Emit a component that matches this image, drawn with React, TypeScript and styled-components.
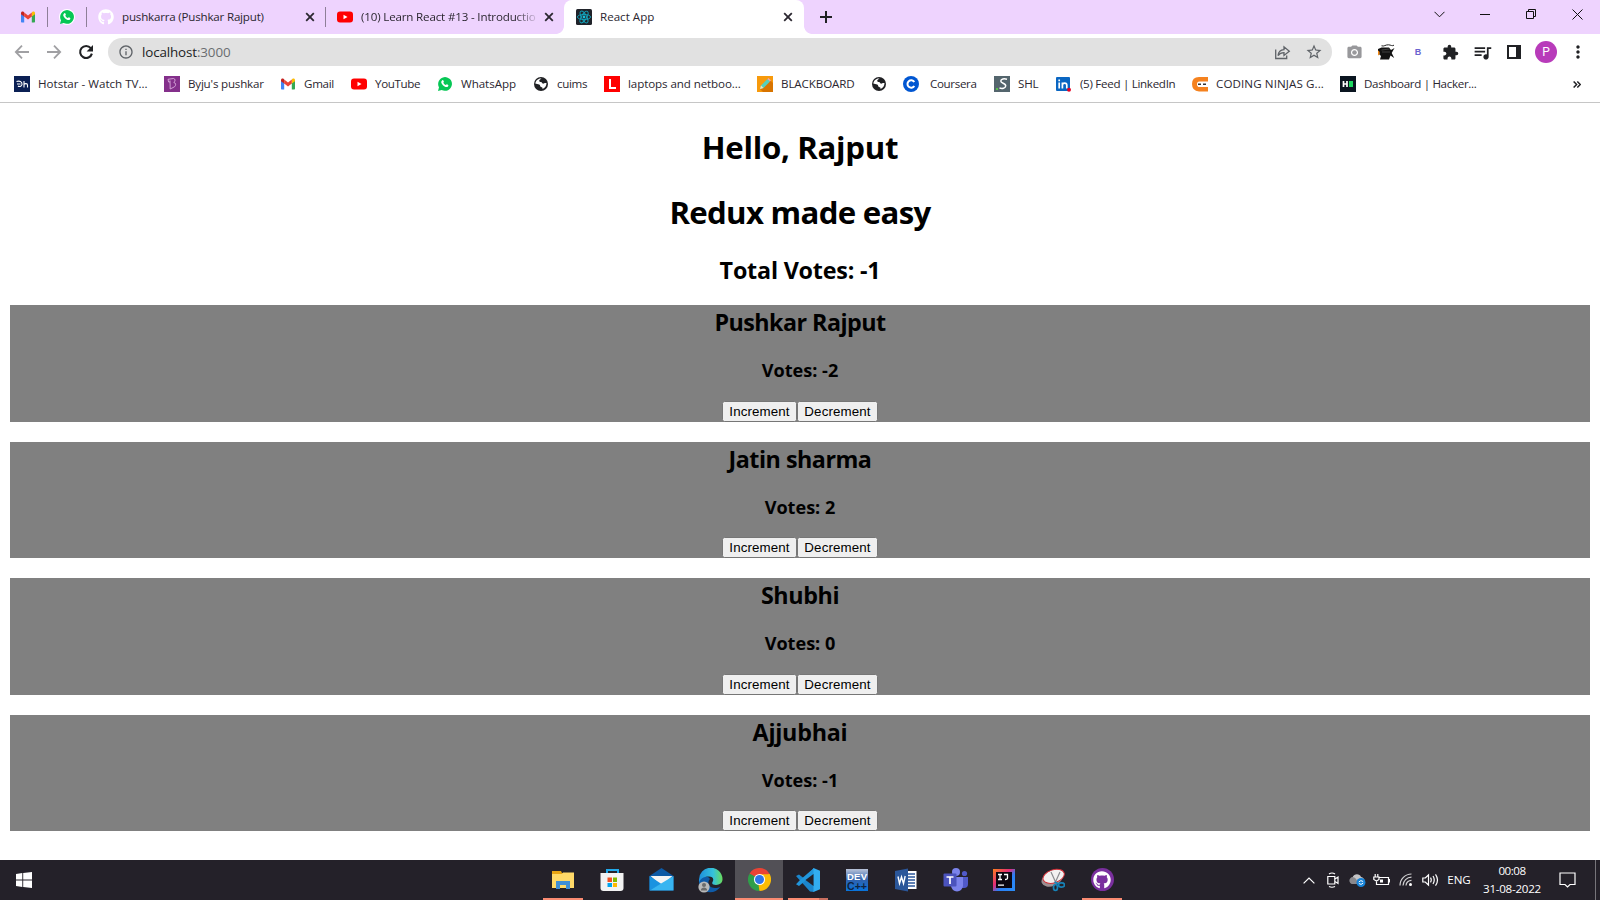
import React from 'react';
import styled, { createGlobalStyle } from 'styled-components';
import { MdStarBorder, MdCameraAlt, MdExtension, MdQueueMusic, MdMoreVert, MdInfoOutline } from 'react-icons/md';
import { FaGithub } from 'react-icons/fa';

const Global = createGlobalStyle`
  * { box-sizing: border-box; }
  body { margin: 0; background: #fff; font-family: "Open Sans", "Noto Sans", sans-serif; }
  svg { display: block; flex: none; }
`;

const Screen = styled.div`
  width: 1600px;
  height: 900px;
  display: flex;
  flex-direction: column;
  overflow: hidden;
`;

const Label = styled.span<{ $ls?: number }>`
  font-size: 11.6px;
  line-height: 16px;
  letter-spacing: ${p => p.$ls ?? 0}px;
  white-space: nowrap;
  color: #2b2730;
`;

/* ---------- Tab strip ---------- */
const TabStrip = styled.div`
  height: 34px;
  background: #eed3fe;
  display: flex;
  flex: none;
`;
const PinnedTab = styled.div<{ $w: number; $pad: number }>`
  width: ${p => p.$w}px;
  padding-left: ${p => p.$pad}px;
  display: flex;
  align-items: center;
`;
const Divider = styled.div`
  width: 1px;
  height: 20px;
  margin-top: 7px;
  background: #8e7f98;
`;
const Tab = styled.div<{ $w: number; $end?: number }>`
  width: ${p => p.$w}px;
  padding: 0 ${p => p.$end ?? 10}px 0 11px;
  display: flex;
  align-items: center;
  gap: 8px;
`;
const TabTitle = styled.div<{ $fade?: boolean }>`
  flex: 1;
  min-width: 0;
  display: flex;
  ${p => p.$fade && 'mask-image: linear-gradient(90deg, #000 88%, transparent 102%);'}
`;
const ActiveTab = styled(Tab)`
  background: #fff;
  border-radius: 8px 8px 0 0;
  padding: 0 11px 0 12px;
`;
const Curve = styled.div<{ $side: 'left' | 'right' }>`
  width: 8px;
  height: 8px;
  align-self: flex-end;
  background: radial-gradient(circle at ${p => (p.$side === 'left' ? '0 0' : '100% 0')}, #eed3fe 7.5px, #fff 8.2px);
`;
const NewTab = styled.div`
  width: 30px;
  padding-left: 7px;
  display: flex;
  align-items: center;
`;
const WindowControls = styled.div`
  margin-left: auto;
  height: 28px;
  display: flex;
`;
const WindowButton = styled.div`
  width: 46px;
  display: flex;
  align-items: center;
  justify-content: center;
`;

/* ---------- Toolbar ---------- */
const Toolbar = styled.div`
  height: 36px;
  padding-left: 14px;
  display: flex;
  align-items: center;
  flex: none;
`;
const NavButton = styled.div`
  width: 32px;
`;
const Omnibox = styled.div`
  width: 1224px;
  height: 28px;
  margin-left: -2px;
  padding: 0 9px 0 10px;
  border-radius: 14px;
  background: #e1e1e1;
  display: flex;
  align-items: center;
  color: #5f6368;
`;
const Address = styled.div`
  flex: 1;
  margin-left: 8px;
  font-size: 13.4px;
  line-height: 20px;
  letter-spacing: -0.13px;
  color: #202124;
`;
const Port = styled.span`
  color: #6a6d70;
`;
const OmniIcon = styled.div`
  margin-left: 14px;
`;
const Extensions = styled.div`
  flex: 1;
  display: flex;
  align-items: center;
  padding-left: 6px;
  color: #202124;
`;
const Extension = styled.div`
  width: 32px;
  display: flex;
  justify-content: center;
`;
const LetterExtension = styled.span`
  font: 700 9px "Liberation Sans", sans-serif;
  color: #6a63cf;
`;
const Avatar = styled.div`
  width: 22px;
  height: 22px;
  border-radius: 50%;
  background: #b83bba;
  color: #fff;
  font: 12px/22px Roboto, sans-serif;
  text-align: center;
`;

/* ---------- Bookmarks ---------- */
const BookmarkBar = styled.div`
  height: 33px;
  padding: 0 14px 4px;
  border-bottom: 1px solid #c6c6c6;
  display: flex;
  align-items: center;
  flex: none;
`;
const Bookmark = styled.div<{ $w: number; $gap?: number }>`
  width: ${p => p.$w}px;
  display: flex;
  align-items: center;
  gap: ${p => p.$gap ?? 8}px;
`;
const More = styled.div`
  margin-left: auto;
  margin-right: 5px;
`;

/* ---------- Page ---------- */
const Page = styled.main`
  flex: 1;
  padding: 22px 10px 0;
  text-align: center;
  color: #000;
`;
const Title = styled.h1<{ $ls: number }>`
  margin: 0 0 22px;
  padding-top: 2px;
  font-size: 31.2px;
  line-height: 41px;
  letter-spacing: ${p => p.$ls}px;
  & + & { margin-bottom: 20px; }
`;
const Subtitle = styled.h2<{ $ls: number }>`
  margin: 0 0 20px;
  padding-top: 3px;
  font-size: 23.3px;
  line-height: 29px;
  letter-spacing: ${p => p.$ls}px;
`;
const CardList = styled.div`
  display: flex;
  flex-direction: column;
  gap: 20.1px;
`;
const Card = styled.section`
  height: 116.5px;
  background: #808080;
`;
const Votes = styled.h3`
  margin: 0 0 18.6px;
  padding-top: 1px;
  font-size: 18.1px;
  line-height: 24px;
`;
const Buttons = styled.div`
  display: flex;
  justify-content: center;
`;
const VoteButton = styled.button<{ $w: number }>`
  width: ${p => p.$w}px;
  height: 21px;
  padding: 1px 0;
  border: 1px solid #767676;
  border-radius: 2.5px;
  background: #efefef;
  color: #000;
  font: 13.333px "Liberation Sans", sans-serif;
  line-height: 17px;
  letter-spacing: 0.12px;
`;

/* ---------- Taskbar ---------- */
const Taskbar = styled.footer`
  height: 40px;
  background: #242129;
  display: flex;
  flex: none;
`;
const Start = styled.div`
  width: 539px;
  padding: 12px 0 0 16px;
`;
const AppList = styled.div`
  display: flex;
  gap: 1px;
`;
const TaskItem = styled.div<{ $active?: boolean }>`
  width: 48px;
  height: 40px;
  display: flex;
  flex-direction: column;
  align-items: center;
  justify-content: space-between;
  padding-top: 8px;
  background: ${p => (p.$active ? '#525056' : 'transparent')};
`;
const Underline = styled.div<{ $w: number; $stack?: boolean }>`
  width: ${p => p.$w}px;
  height: 2px;
  background: ${p => (p.$stack ? 'linear-gradient(90deg, #fa8b72 31px, #c86f60 31px)' : '#fa8b72')};
`;
const Tray = styled.div`
  margin-left: auto;
  display: flex;
  align-items: center;
`;
const TrayIcon = styled.div<{ $w: number }>`
  width: ${p => p.$w}px;
  display: flex;
  justify-content: center;
`;
const TrayText = styled(Label)`
  color: #fff;
`;
const Clock = styled.div`
  width: 73px;
  height: 36px;
  padding: 1px 1px 0 0;
  display: flex;
  flex-direction: column;
  align-items: center;
  gap: 2px;
`;
const ShowDesktop = styled.div`
  width: 5px;
  height: 40px;
  border-left: 1px solid #77757a;
`;

/* ---------- Icons ---------- */
const Gmail = () => (
  <svg width="16" height="16" viewBox="0 0 16 16">
    <path d="M1 4v8.6c0 .6.4 1 1 1h2.200V7.200z" fill="#4285f4" />
    <path d="M15 4v8.600c0 .6-.4 1-1 1h-2.200V7.200z" fill="#34a853" />
    <path d="M11.800 3.500v4L15 5.200V4c0-1.500-1.500-2-2.500-1.200z" fill="#fbbc04" />
    <path d="M4.200 7.500v-4L8 6.400l3.800-2.900v4L8 10.400z" fill="#ea4335" />
    <path d="M1 4v1.200l3.200 2.300v-4l-.7-.7C2.500 2 1 2.500 1 4z" fill="#c5221f" />
  </svg>
);
const YouTube = () => (
  <svg width="16" height="16" viewBox="0 0 16 16"><rect y="2.400" width="16" height="11.200" rx="3" fill="#f00" /><path d="M6.500 5.700v4.600l4-2.300z" fill="#fff" /></svg>
);
const WhatsApp = ({ ring = false }: { ring?: boolean }) => (
  <svg width="16" height="16" viewBox="0 0 16 16">
    {ring && <circle cx="8" cy="8" r="8" fill="#fff" />}
    <path d="M1 15l1-3.700A6.900 6.900 0 1 1 4.700 14z" fill="#06c755" />
    <path d="M5.300 4.300c.5-.4.9-.2 1.100.3l.5 1.200-.6.900c.6 1.200 1.500 1.900 2.600 2.400l.8-.8c.9.4 1.900.8 1.700 1.300-.3 1.500-1.700 1.700-2.800 1.300-2-.7-3.600-2.200-4.300-4.100-.2-1 .3-2 1-2.500z" fill="#fff" />
  </svg>
);
const ReactMark = () => (
  <svg width="16" height="16" viewBox="0 0 16 16">
    <rect width="16" height="16" rx="1.500" fill="#20232a" />
    <g fill="none" stroke="#12a5bd" strokeWidth=".9">
      <ellipse cx="8" cy="8" rx="6.600" ry="2.600" /><ellipse cx="8" cy="8" rx="6.600" ry="2.600" transform="rotate(60 8 8)" /><ellipse cx="8" cy="8" rx="6.600" ry="2.600" transform="rotate(120 8 8)" />
    </g>
    <circle cx="8" cy="8" r="1.400" fill="#1ac0da" />
  </svg>
);
const Close = () => (
  <svg width="10" height="10" viewBox="0 0 10 10" stroke="#2b2730" strokeWidth="1.800"><path d="M1.200 1.200l7.600 7.600M8.800 1.200L1.200 8.800" /></svg>
);
const Arrow = ({ flip = false }: { flip?: boolean }) => (
  <svg width="16" height="16" viewBox="0 0 16 16" fill="none" stroke="#a0a0a3" strokeWidth="1.800">
    {flip ? <path d="M1 8h13M8 1.600L14.200 8 8 14.400" /> : <path d="M15 8H2M8 1.600L1.800 8 8 14.400" />}
  </svg>
);
const Reload = () => (
  <svg width="16" height="16" viewBox="0 0 16 16"><path d="M12.800 4.200A6 6 0 1 0 13.900 9.600" fill="none" stroke="#202124" strokeWidth="2.100" /><path d="M15 1v6.400H8.600z" fill="#202124" /></svg>
);
const Share = () => (
  <svg width="17" height="16" viewBox="0 0 17 16" fill="none" stroke="#5f6368" strokeWidth="1.300">
    <path d="M1.700 5.500v9h11v-3" /><path d="M4 11.500c.5-4 2.800-5.700 6-5.800V2.800l5.300 4.400-5.300 4.300V8.600c-2.700 0-4.500.8-6 2.900z" />
  </svg>
);
const Fish = () => (
  <svg width="17" height="16" viewBox="0 0 17 16">
    <path d="M0 5l3.500-1.500H11L13 6l3.500-2-2.800 5 2.500 5-3.700-2.500L11 15.500H2L3 12 0 9z" fill="#111" />
    <path d="M3.500 1.800c2.500 1 4-1.200 7-1 2.500.2 3.500 1.500 5.500.4" stroke="#222" fill="none" />
    <path d="M3.500 6l8-1M4 8h8" stroke="#4c4c4c" strokeWidth=".8" />
    <path d="M0 6.500c2.300 1 2.300 4 0 5z" fill="#f28a18" />
  </svg>
);
const SidePanel = () => (
  <svg width="14" height="14" viewBox="0 0 14 14"><path fill="#202124" fillRule="evenodd" d="M0 0h14v14H0zM2 2v10h7V2z" /></svg>
);
const Square = ({ children, bg }: { children?: React.ReactNode; bg: string }) => (
  <svg width="16" height="16" viewBox="0 0 16 16"><rect width="16" height="16" fill={bg} />{children}</svg>
);
const Hotstar = () => <Square bg="#0b2054"><g fill="none" stroke="#fff" strokeWidth="1.100"><path d="M2.500 5.500c3-1 5.800.2 5.500 3-.3 2-3 2.500-4 1.500M3 8h3.500M10 5v6.500M10 8.500c.8-1.300 3.500-1.300 3.500.5v2.500" /></g></Square>;
const Byjus = () => <Square bg="#84308b"><path d="M4 3.300l5.500-.8c2 .2 2 2.700.3 3.900 2.200.3 2.400 3.100.7 4.400L6.200 13 6 4.500M4 3.300l.6 2.700H6" fill="none" stroke="#d9abdc" strokeWidth=".9" /></Square>;
const Laptops = () => <Square bg="#f00"><path d="M6 3v9h6" fill="none" stroke="#fff" strokeWidth="2" /></Square>;
const Pencil = () => <Square bg="#f79a0c"><path d="M3 13L13 4l3 3v9H6z" fill="#d87400" /><path d="M3 13l1-3.500L10.500 3 13 5.500 6.500 12z" fill="#54d0bd" /><path d="M3 13l1-3.500L6.500 12z" fill="#fbe0b4" /><path d="M10.500 3l1-1L14 4.500l-1 1z" fill="#f3a2b5" /></Square>;
const Coursera = () => <svg width="16" height="16" viewBox="0 0 16 16"><circle cx="8" cy="8" r="8" fill="#0056d2" /><path d="M11.300 6A3.700 3.700 0 1 0 11.300 10" fill="none" stroke="#fff" strokeWidth="2" /></svg>;
const Shl = () => <Square bg="#54656d"><path d="M13 3.200c-3-.7-6-.4-6.200 1.800-.2 2.500 5.200 2 4.900 5-.2 2.500-3.600 2.700-6.200 2.100" fill="none" stroke="#fff" strokeWidth="1.500" /><rect x="2" y="12" width="2" height="2" fill="#57c04a" /></Square>;
const LinkedIn = () => <svg width="16" height="16" viewBox="0 0 16 16"><rect y="1" width="14" height="14" rx="1" fill="#0a66c2" /><path d="M3.200 6.500v6M3.200 3.500v1.700M6.400 12.500v-6M6.400 9c.3-2.500 4.400-2.500 4.400.2v3.300" stroke="#fff" strokeWidth="1.700" fill="none" /><circle cx="13" cy="13.800" r="2" fill="#e60023" /></svg>;
const Ninjas = () => <svg width="16" height="16" viewBox="0 0 16 16"><path d="M16 1H7Q0 1 0 8t7 7.500h9V11H7.500Q5 11 5 8.200T7.500 5.500H16z" fill="#f5821f" /><path d="M6 8.300h3M11 8.300h3" stroke="#333" strokeWidth="1.600" /></svg>;
const Hacker = () => <Square bg="#0a1520"><path d="M3.500 5v6M7 5v6M3.500 8H7" stroke="#fff" strokeWidth="1.700" /><rect x="9" y="5" width="4" height="6" fill="#1ed760" /></Square>;
const Globe = () => (
  <svg width="16" height="16" viewBox="0 0 16 16">
    <circle cx="8" cy="8" r="7" fill="#202124" />
    <path d="M8.500 2.500c-.8.800-2.200 1-2.300 2.300 0 1 .8 1.200 1.800 1.200 1.200.1.800 1.300 1.800 1.600 1.300.3 1.500-1 3.700-.6C13.500 9.700 12 12 9.500 13c.3-1.500-.5-1.800-1.500-2-1.200-.3-.5-1.800-1.800-2.400C5 8 3.500 8 2.300 7.500c.3-2.700 3-5.500 6.200-5z" fill="#fff" />
    <path d="M8 3.500c1 .3 2.500 1 3.500 2.500-1.500.5-2-.3-3-.8z" fill="#202124" />
  </svg>
);

const Folder = () => <svg width="24" height="24" viewBox="0 0 24 24"><path d="M1 3h9l1 2h11v15H1z" fill="#e8a413" /><path d="M1 6h10l1-1.500h11V20H1z" fill="#ffd968" /><path d="M5 21v-8h14v8h-4v-4H9v4z" fill="#3f8fd6" /></svg>;
const Store = () => <svg width="24" height="24" viewBox="0 0 24 24"><path d="M7 6V2h11v4" fill="none" stroke="#21a9ea" strokeWidth="2" /><path d="M.5 5h23v15q0 3-3 3h-17q-3 0-3-3z" fill="#f3f3f3" /><path d="M7.500 9.500H12V14H7.500z" fill="#f25022" /><path d="M13 9.500h4V14h-4z" fill="#7fba00" /><path d="M7.500 15H12v4H7.500z" fill="#00a4ef" /><path d="M13 15h4v4h-4z" fill="#ffb900" /></svg>;
const Mail = () => <svg width="25" height="24" viewBox="0 0 25 24"><path d="M.5 8l12-8 12 8v14.500H.5z" fill="#0c59a4" /><path d="M1.500 8h22l-11 10z" fill="#f4f4f4" /><path d="M.5 8l12 8-12 6.500z" fill="#1a93e0" /><path d="M24.500 8L.5 22.500h24z" fill="#38b5f1" /></svg>;
const Edge = () => (
  <svg width="25" height="25" viewBox="0 0 25 25">
    <defs><linearGradient id="edge" x1="0" x2="1"><stop offset="0" stopColor="#1d8fdc" /><stop offset=".6" stopColor="#35c1dc" /><stop offset="1" stopColor="#69dc5c" /></linearGradient></defs>
    <path d="M1 12c2-4 9-5 11-1-3 3-2 9 5 9 2 0 4-.5 5.500-1.500C18 25.500 9 26 4 21c-2-2-3.500-6-3-9z" fill="#0f5ba8" />
    <path d="M1 12A11.700 11.700 0 0 1 24.500 11c.2 4-3 6-6.500 6-3 0-5-1-3-4 1-3-1-4.500-4-4.500C5 8.500 2 11 1 15z" fill="url(#edge)" />
    <circle cx="6" cy="19" r="5.600" fill="#b9b9b9" /><circle cx="6" cy="17" r="2" fill="#6c6c6c" /><path d="M2.800 22.500c0-4 6.400-4 6.400 0z" fill="#6c6c6c" />
  </svg>
);
const Chrome = () => (
  <svg width="23" height="23" viewBox="0 0 24 24">
    <path d="M12 12L1.600 6A12 12 0 0 1 22.400 6z" fill="#ea4335" /><path d="M12 12L22.400 6A12 12 0 0 1 12 24z" fill="#fbbc05" /><path d="M12 12v12A12 12 0 0 1 1.600 6z" fill="#2f9e4a" />
    <path d="M12 6.500h10.600L17 15z" fill="#fbbc05" /><path d="M16.800 14.800L12 24l-1-6z" fill="#fbbc05" /><path d="M7.200 14.800L1.600 6l6 3z" fill="#2f9e4a" />
    <circle cx="12" cy="12" r="5.800" fill="#fff" /><circle cx="12" cy="12" r="4.700" fill="#2f76e8" />
  </svg>
);
const VsCode = () => <svg width="24" height="24" viewBox="0 0 24 24"><path d="M18 0L7.500 10 3 6.500 0 8l14 15.500 4 .5z" fill="#1b86cc" /><path d="M0 16.300L3 18 18 5.500V0L4 12z" fill="#2196dc" /><path d="M17.500 0L24 2.800v18.400L17.500 24z" fill="#32adf0" /><path d="M17.500 6v12L9.500 12z" fill="#242129" /></svg>;
const AppText = styled.text`
  font-family: "Liberation Sans", sans-serif;
  font-weight: 700;
`;
const DevCpp = () => (
  <svg width="24" height="24" viewBox="0 0 24 24">
    <defs><linearGradient id="dev" x2="0" y2="1"><stop offset="0" stopColor="#b9c3d8" /><stop offset=".5" stopColor="#2f62ae" /><stop offset="1" stopColor="#0974dc" /></linearGradient></defs>
    <rect x="1" y="1" width="22" height="22" fill="url(#dev)" /><AppText x="2" y="11.500" fontSize="9.500" fill="#fff" textLength="20">DEV</AppText><AppText x="2" y="22" fontSize="11" fill="#10233f" textLength="20" lengthAdjust="spacingAndGlyphs">C++</AppText>
  </svg>
);
const Word = () => <svg width="24" height="24" viewBox="0 0 24 24"><path d="M12 3h10.500v18H12z" fill="#fff" /><path d="M14 6h7M14 9h7M14 12h7M14 15h7M14 18h7" stroke="#2b579a" strokeWidth="1.300" /><path d="M1 3l13-2.500v23L1 21z" fill="#2b579a" /><path d="M4 8.500l1.500 7 2-6.500 2 6.500 1.700-7.500" fill="none" stroke="#fff" strokeWidth="1.400" /></svg>;
const Teams = () => <svg width="25" height="24" viewBox="0 0 25 24"><circle cx="13" cy="4" r="4" fill="#7b83eb" /><circle cx="21.500" cy="5.500" r="2.600" fill="#5059c9" /><path d="M17 9h8v7q0 4-4 4h-4z" fill="#5059c9" /><path d="M8 9h12v9q-1 5-6 5.500-5-.5-6-5.500z" fill="#7b83eb" /><rect x=".5" y="5.500" width="13" height="13" rx="1" fill="#4b53bc" /><path d="M3.500 9h7M7 9v7" stroke="#fff" strokeWidth="1.700" /></svg>;
const IntelliJ = () => (
  <svg width="24" height="24" viewBox="0 0 24 24">
    <defs><linearGradient id="ij" x2="1" y2="1"><stop offset="0" stopColor="#fc801d" /><stop offset=".4" stopColor="#e42a78" /><stop offset=".6" stopColor="#2b7ff5" /><stop offset="1" stopColor="#2a8cf5" /></linearGradient></defs>
    <path d="M1 1h22v22H1z" fill="url(#ij)" /><path d="M4 4h16v16H4z" fill="#0b0610" /><path d="M6 6.500h4M8 6.500v5M6 11.500h4M12 6.500h3.500v3.500q0 1.500-2.500 1.500M6 17.200h6" fill="none" stroke="#fff" strokeWidth="1.300" />
  </svg>
);
const Snip = () => <svg width="24" height="24" viewBox="0 0 24 24"><ellipse cx="11" cy="11" rx="11" ry="7" fill="#9c8f92" transform="rotate(-22 11 11)" /><ellipse cx="12.500" cy="8.500" rx="11" ry="6.500" fill="#f3f1f1" stroke="#d22f37" transform="rotate(-18 12 8)" /><path d="M10 4l5 11M19 4l-5 11" stroke="#8b8b8f" strokeWidth="1.200" /><g fill="none" stroke="#1783b8" strokeWidth="1.700"><ellipse cx="14.500" cy="19.500" rx="2" ry="3" /><ellipse cx="20.500" cy="17" rx="3" ry="2.200" /><path d="M13.500 14l4.500 2" /></g></svg>;
const GitHubApp = styled.div`
  width: 23px;
  height: 23px;
  border-radius: 50%;
  background: #7a2f9e;
  display: flex;
  align-items: center;
  justify-content: center;
`;
const Windows = () => <svg width="16" height="16" viewBox="0 0 16 16" fill="#fff"><path d="M0 2l6.300-.9v6.400H0zM7.200 1L16 0v7.500H7.200zM0 8.500h6.300v6.400L0 14zM7.200 8.500H16V16l-8.800-1z" /></svg>;
const Line = ({ w, h, children }: { w: number; h: number; children: React.ReactNode }) => <svg width={w} height={h} viewBox={`0 0 ${w} ${h}`} fill="none" stroke="#fff" strokeWidth="1.200">{children}</svg>;

const BOOKMARKS: { icon: React.ReactNode; text?: string; w: number; ls?: number; gap?: number }[] = [
  { icon: <Hotstar />, text: 'Hotstar - Watch TV...', w: 150 },
  { icon: <Byjus />, text: "Byju's pushkar", w: 116, ls: -0.2 },
  { icon: <Gmail />, text: 'Gmail', w: 71, ls: -0.3 },
  { icon: <YouTube />, text: 'YouTube', w: 86, ls: -0.35 },
  { icon: <WhatsApp />, text: 'WhatsApp', w: 96, ls: -0.05 },
  { icon: <Globe />, text: 'cuims', w: 71, ls: -0.35 },
  { icon: <Laptops />, text: 'laptops and netboo...', w: 153, ls: -0.1 },
  { icon: <Pencil />, text: 'BLACKBOARD', w: 114, ls: -0.1 },
  { icon: <Globe />, w: 32 },
  { icon: <Coursera />, text: 'Coursera', w: 91, ls: -0.35, gap: 11 },
  { icon: <Shl />, text: 'SHL', w: 62, ls: -0.2 },
  { icon: <LinkedIn />, text: '(5) Feed | LinkedIn', w: 136, ls: -0.3 },
  { icon: <Ninjas />, text: 'CODING NINJAS G...', w: 148, ls: 0.1 },
  { icon: <Hacker />, text: 'Dashboard | Hacker...', w: 140, ls: -0.32 },
];
const PEOPLE = [
  { name: 'Pushkar Rajput', votes: -2, ls: -0.55 },
  { name: 'Jatin sharma', votes: 2, ls: -0.5 },
  { name: 'Shubhi', votes: 0, ls: -0.4 },
  { name: 'Ajjubhai', votes: -1, ls: -0.25 },
];
const APPS: { icon: React.ReactNode; line?: number; active?: boolean; stack?: boolean }[] = [
  { icon: <Folder />, line: 40 }, { icon: <Store /> }, { icon: <Mail /> }, { icon: <Edge /> },
  { icon: <Chrome />, line: 48, active: true }, { icon: <VsCode />, line: 40, stack: true },
  { icon: <DevCpp /> }, { icon: <Word /> }, { icon: <Teams /> }, { icon: <IntelliJ /> }, { icon: <Snip /> },
  { icon: <GitHubApp><FaGithub size={18} color="#fff" /></GitHubApp>, line: 40 },
];

export default function App() {
  return (
    <Screen>
      <Global />
      <TabStrip>
        <PinnedTab $w={47} $pad={20}><Gmail /></PinnedTab>
        <Divider />
        <PinnedTab $w={38} $pad={11}><WhatsApp ring /></PinnedTab>
        <Divider />
        <Tab $w={238}><FaGithub size={16} color="#fff" /><TabTitle><Label $ls={-0.2}>pushkarra (Pushkar Rajput)</Label></TabTitle><Close /></Tab>
        <Divider />
        <Tab $w={230} $end={2}><YouTube /><TabTitle $fade><Label $ls={-0.17}>(10) Learn React #13 - Introductio</Label></TabTitle><Close /></Tab>
        <Curve $side="left" />
        <ActiveTab $w={240}><ReactMark /><TabTitle><Label>React App</Label></TabTitle><Close /></ActiveTab>
        <Curve $side="right" />
        <NewTab><svg width="14" height="14" viewBox="0 0 14 14" stroke="#202124" strokeWidth="2"><path d="M7 1v12M1 7h12" /></svg></NewTab>
        <WindowControls>
          <WindowButton><svg width="11" height="7" viewBox="0 0 11 7" fill="none" stroke="#111"><path d="M.5.8l5 5 5-5" /></svg></WindowButton>
          <WindowButton><svg width="10" height="1"><rect width="10" height="1" fill="#111" /></svg></WindowButton>
          <WindowButton><svg width="10" height="10" viewBox="0 0 10 10" fill="none" stroke="#111"><path d="M.5 2.500h7v7h-7zM2.500 2.500v-2h7v7h-2" /></svg></WindowButton>
          <WindowButton><svg width="11" height="11" viewBox="0 0 11 11" stroke="#111"><path d="M.5.5l10 10M10.500.5l-10 10" /></svg></WindowButton>
        </WindowControls>
      </TabStrip>
      <Toolbar>
        <NavButton><Arrow /></NavButton>
        <NavButton><Arrow flip /></NavButton>
        <NavButton><Reload /></NavButton>
        <Omnibox>
          <MdInfoOutline size={16} />
          <Address>localhost<Port>:3000</Port></Address>
          <OmniIcon><Share /></OmniIcon>
          <OmniIcon><MdStarBorder size={18} /></OmniIcon>
        </Omnibox>
        <Extensions>
          <Extension><MdCameraAlt size={17} color="#98989b" /></Extension>
          <Extension><Fish /></Extension>
          <Extension><LetterExtension>B</LetterExtension></Extension>
          <Extension><MdExtension size={17} /></Extension>
          <Extension><MdQueueMusic size={21} /></Extension>
          <Extension><SidePanel /></Extension>
          <Extension><Avatar>P</Avatar></Extension>
          <Extension><MdMoreVert size={20} /></Extension>
        </Extensions>
      </Toolbar>
      <BookmarkBar>
        {BOOKMARKS.map((b, i) => (
          <Bookmark key={i} $w={b.w} $gap={b.gap}>{b.icon}{b.text && <Label $ls={b.ls}>{b.text}</Label>}</Bookmark>
        ))}
        <More><svg width="8" height="7" viewBox="0 0 8 7" fill="none" stroke="#202124" strokeWidth="1.500"><path d="M.6.5l3 3-3 3M4.300.5l3 3-3 3" /></svg></More>
      </BookmarkBar>
      <Page>
        <Title $ls={-0.3}>Hello, Rajput</Title>
        <Title $ls={-0.7}>Redux made easy</Title>
        <Subtitle $ls={-0.2}>Total Votes: -1</Subtitle>
        <CardList>
          {PEOPLE.map(p => (
            <Card key={p.name}>
              <Subtitle $ls={p.ls}>{p.name}</Subtitle>
              <Votes>Votes: {p.votes}</Votes>
              <Buttons><VoteButton $w={75}>Increment</VoteButton><VoteButton $w={81}>Decrement</VoteButton></Buttons>
            </Card>
          ))}
        </CardList>
      </Page>
      <Taskbar>
        <Start><Windows /></Start>
        <AppList>
          {APPS.map((a, i) => (
            <TaskItem key={i} $active={a.active}>{a.icon}{a.line && <Underline $w={a.line} $stack={a.stack} />}</TaskItem>
          ))}
        </AppList>
        <Tray>
          <TrayIcon $w={24}><Line w={12} h={7}><path d="M.6 6.400L6 1l5.400 5.400" /></Line></TrayIcon>
          <TrayIcon $w={24}><Line w={12} h={16}><path d="M.8 4.500h7v7.500h-7zM8 7l3-2v6.500l-3-2M2 2q3-2 6 0M2 14.500q3 1.500 6 0" /></Line></TrayIcon>
          <TrayIcon $w={24}><svg width="17" height="14" viewBox="0 0 17 14"><path d="M3.500 11a3.500 3.500 0 0 1 0-6.500C5 0 11 .5 12 4c3 .5 4 3 3.500 7z" fill="#c4c4c6" /><path d="M3 11a3.500 3.500 0 1 1 4-5l3 5z" fill="#8a898d" /><circle cx="12" cy="9.500" r="4.500" fill="#1683d8" /><path d="M9.800 9q2-2.500 4.300-.5M14.200 10q-2 2.500-4.300.5" stroke="#fff" fill="none" /></svg></TrayIcon>
          <TrayIcon $w={24}><Line w={17} h={13}><path d="M6.500 3.500h9v7H5.500M15.500 5.500h1v3M2.200 0v3M4.800 0v3M.8 3h5.200v2.500L3.500 7 .8 5.500zM3.500 7v3.500h2" /><rect x="7" y="5.500" width="3" height="3" fill="#fff" stroke="none" /></Line></TrayIcon>
          <TrayIcon $w={25}><Line w={14} h={14}><g stroke="#d0d0d2"><path d="M1 12.500A11.500 11.500 0 0 1 12.500 1M4 12.500A8.500 8.500 0 0 1 12.500 4.200M7 12.500a5.500 5.500 0 0 1 5.500-5.200" /></g><circle cx="11.500" cy="11.500" r="1.500" fill="#fff" stroke="none" /></Line></TrayIcon>
          <TrayIcon $w={24}><Line w={17} h={14}><path d="M.8 5h2.500l3.200-3v10L3.300 9H.8zM8.500 4.700q1.500 2.300 0 4.600M11 3q2.500 4 0 8M13.500 1.300q4 5.700 0 11.400" /></Line></TrayIcon>
          <TrayIcon $w={34}><TrayText $ls={-0.1}>ENG</TrayText></TrayIcon>
          <Clock><TrayText $ls={-0.5}>00:08</TrayText><TrayText $ls={-0.25}>31-08-2022</TrayText></Clock>
          <TrayIcon $w={36}><Line w={17} h={16}><path d="M1 1h15v11.500h-5L8.500 15 6 12.500H1z" /></Line></TrayIcon>
          <TrayIcon $w={10} />
          <ShowDesktop />
        </Tray>
      </Taskbar>
    </Screen>
  );
}
